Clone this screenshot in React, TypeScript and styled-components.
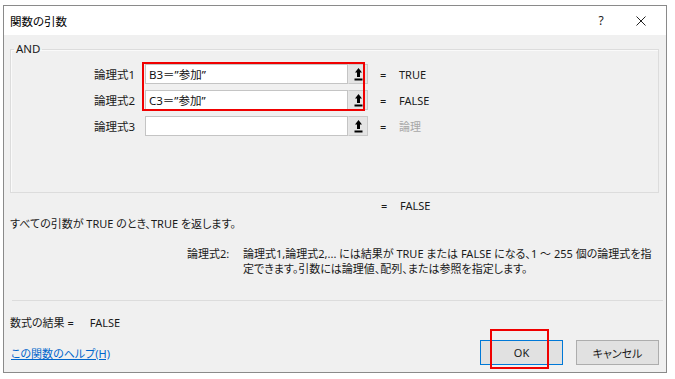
import React from "react";
import styled, { createGlobalStyle } from "styled-components";

const Global = createGlobalStyle`
  html, body { margin: 0; padding: 0; background: #ffffff; }
  body {
    font-family: "Noto Sans", "Noto Sans CJK JP", sans-serif;
    font-size: 11px;
    color: #1a1a1a;
    font-feature-settings: "palt";
  }
`;

const Page = styled.div`
  width: 675px;
  height: 379px;
  padding: 5px 0 0 3px;
  box-sizing: border-box;
`;

const Window = styled.div`
  width: 664px;
  height: 368px;
  box-sizing: border-box;
  border: 1px solid #8a8a8a;
  display: flex;
  flex-direction: column;
  background: #f0f0f0;
`;

const TitleBar = styled.div`
  height: 29px;
  flex: none;
  background: #ffffff;
  display: flex;
  align-items: center;
  padding: 0 5px 0 6px;
  font-size: 11.5px;
  color: #000;
`;

const TitleText = styled.span`
  flex: 1;
`;

const TitleButton = styled.span`
  width: 40px;
  display: flex;
  justify-content: center;
  align-items: center;
  color: #222;
  font-size: 12px;
`;

const Body = styled.div`
  flex: 1;
  display: flex;
  flex-direction: column;
  padding: 6px 7px 0 6px;
`;

const Group = styled.fieldset`
  margin: 0;
  padding: 7px 0 56px 0;
  border: 1px solid #dcdcdc;
  box-shadow: inset 1px 1px 0 #fafafa;
  width: 649px;
  box-sizing: border-box;
`;

const Legend = styled.legend`
  padding: 0 2px;
  margin-left: 3px;
  line-height: 16px;
  font-size: 11.5px;
  color: #1a1a1a;
`;

const Rows = styled.div`
  display: flex;
  flex-direction: column;
  gap: 6px;
`;

const Highlight = styled.div`
  position: relative;
  display: flex;
  flex-direction: column;
  gap: 6px;
`;

const RedFrame = styled.div`
  position: absolute;
  box-sizing: border-box;
  border: 2px solid #f00000;
  pointer-events: none;
`;

const Row = styled.div`
  display: flex;
  align-items: center;
  height: 20px;
`;

const ArgLabel = styled.span`
  width: 124px;
  text-align: right;
  margin-right: 10px;
  font-size: 11.5px;
`;

const Input = styled.div`
  width: 203px;
  height: 20px;
  box-sizing: border-box;
  border: 1px solid #c4c4c4;
  background: #ffffff;
  display: flex;
  align-items: center;
  padding-left: 3px;
  color: #111;
  font-size: 11.5px;
`;

const RefButton = styled.div`
  width: 20px;
  height: 20px;
  box-sizing: border-box;
  border: 1px solid #c9c9c9;
  border-left-color: #e6e6e6;
  background: #e4e4e4;
  display: flex;
  align-items: center;
  justify-content: center;
`;

const Eq = styled.span`
  width: 19px;
  margin-left: 12px;
  flex: none;
`;

const Value = styled.span<{ $muted?: boolean }>`
  color: ${(p) => (p.$muted ? "#a8a8a8" : "#1a1a1a")};
`;

const ResultLine = styled.div`
  display: flex;
  height: 16px;
  line-height: 16px;
  margin-top: 5px;
  padding-left: 371px;
`;

const Description = styled.div`
  line-height: 16px;
  margin-top: 2px;
  padding-left: 0px;
`;

const ArgHelp = styled.div`
  display: flex;
  margin-top: 14px;
  line-height: 15px;
  padding-left: 177px;
`;

const ArgHelpLabel = styled.span`
  width: 56px;
  flex: none;
`;

const ArgHelpText = styled.div`
  display: flex;
  flex-direction: column;
  white-space: nowrap;
`;

const Separator = styled.div`
  height: 1px;
  background: #dcdcdc;
  margin-top: 24px;
  margin-left: 2px;
  width: 651px;
`;

const FormulaResult = styled.div`
  margin-top: 14px;
  line-height: 16px;
  padding-left: 0px;
  display: flex;
`;

const ResultValue = styled.span`
  margin-left: 16px;
`;

const Footer = styled.div`
  display: flex;
  align-items: center;
  margin-top: 9px;
  padding-left: 1px;
`;

const HelpLink = styled.a`
  color: #0066cc;
  text-decoration: underline;
  flex: 1;
  cursor: pointer;
`;

const DialogButton = styled.div<{ $primary?: boolean }>`
  width: 83px;
  height: 25px;
  box-sizing: border-box;
  background: #e1e1e1;
  border: 1px solid ${(p) => (p.$primary ? "#0078d7" : "#adadad")};
  display: flex;
  align-items: center;
  justify-content: center;
  margin-left: ${(p) => (p.$primary ? "0" : "13px")};
  position: relative;
`;

const UpArrow = () => (
  <svg width="9" height="13" viewBox="0 0 9 13">
    <polygon points="4.5,0 8,4.5 6,4.5 6,9 3,9 3,4.5 1,4.5" fill="#000" />
    <rect x="0.5" y="10.5" width="8" height="2" fill="#000" />
  </svg>
);

const CloseIcon = () => (
  <svg width="10" height="10" viewBox="0 0 10 10">
    <path d="M0.5 0.5 L9.5 9.5 M9.5 0.5 L0.5 9.5" stroke="#222" strokeWidth="1" />
  </svg>
);

export default function App() {
  return (
    <>
      <Global />
      <Page>
        <Window>
          <TitleBar>
            <TitleText>関数の引数</TitleText>
            <TitleButton>?</TitleButton>
            <TitleButton>
              <CloseIcon />
            </TitleButton>
          </TitleBar>
          <Body>
            <Group>
              <Legend>AND</Legend>
              <Rows>
                <Highlight>
                  <Row>
                    <ArgLabel>論理式1</ArgLabel>
                    <Input>B3＝”参加”</Input>
                    <RefButton>
                      <UpArrow />
                    </RefButton>
                    <Eq>=</Eq>
                    <Value>TRUE</Value>
                  </Row>
                  <Row>
                    <ArgLabel>論理式2</ArgLabel>
                    <Input>C3＝”参加”</Input>
                    <RefButton>
                      <UpArrow />
                    </RefButton>
                    <Eq>=</Eq>
                    <Value>FALSE</Value>
                  </Row>
                  <RedFrame style={{ left: 131, top: -2, width: 223, height: 49 }} />
                </Highlight>
                <Row>
                  <ArgLabel>論理式3</ArgLabel>
                  <Input />
                  <RefButton>
                    <UpArrow />
                  </RefButton>
                  <Eq>=</Eq>
                  <Value $muted>論理</Value>
                </Row>
              </Rows>
            </Group>
            <ResultLine>
              <Eq style={{ marginLeft: 0 }}>=</Eq>
              <Value>FALSE</Value>
            </ResultLine>
            <Description>すべての引数が TRUE のとき、TRUE を返します。</Description>
            <ArgHelp>
              <ArgHelpLabel>論理式2:</ArgHelpLabel>
              <ArgHelpText>
                <span>論理式1,論理式2,... には結果が TRUE または FALSE になる、1 ～ 255 個の論理式を指</span>
                <span>定できます。引数には論理値、配列、または参照を指定します。</span>
              </ArgHelpText>
            </ArgHelp>
            <Separator />
            <FormulaResult>
              <span>数式の結果 =</span>
              <ResultValue>FALSE</ResultValue>
            </FormulaResult>
            <Footer>
              <HelpLink>この関数のヘルプ(H)</HelpLink>
              <DialogButton $primary>
                OK
                <RedFrame style={{ left: 9, top: -12, width: 59, height: 40 }} />
              </DialogButton>
              <DialogButton>キャンセル</DialogButton>
            </Footer>
          </Body>
        </Window>
      </Page>
    </>
  );
}
